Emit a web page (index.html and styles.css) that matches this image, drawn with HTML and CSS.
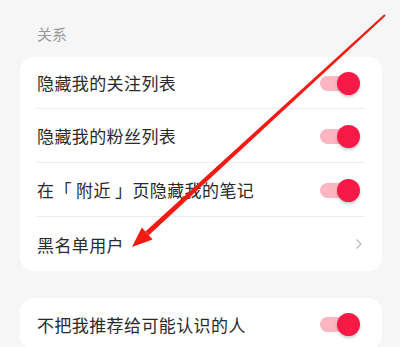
FILE: index.html
```html
<!DOCTYPE html>
<html lang="zh">
<head>
<meta charset="utf-8">
<link rel="stylesheet" href="styles.css">
</head>
<body>
<div class="page">
  <div class="section-title">关系</div>
  <div class="card">
    <div class="row">
      <span class="label">隐藏我的关注列表</span>
      <span class="toggle"><span class="knob"></span></span>
    </div>
    <div class="row">
      <span class="label">隐藏我的粉丝列表</span>
      <span class="toggle"><span class="knob"></span></span>
    </div>
    <div class="row">
      <span class="label">在「 附近 」页隐藏我的笔记</span>
      <span class="toggle"><span class="knob"></span></span>
    </div>
    <div class="row">
      <span class="label">黑名单用户</span>
      <svg class="chevron" width="8" height="12" viewBox="0 0 8 12"><path d="M1.5 1.5 L6 6 L1.5 10.5" fill="none" stroke="#b8b8b8" stroke-width="1.2"/></svg>
    </div>
  </div>
  <div class="card card-second">
    <div class="row">
      <span class="label">不把我推荐给可能认识的人</span>
      <span class="toggle"><span class="knob"></span></span>
    </div>
  </div>
</div>
<svg class="arrow" width="400" height="347" viewBox="0 0 400 347">
  <polygon points="385.7,15.7 384.3,14.3 145.4,231.6 148.8,235.3" fill="#f21a12"/>
  <polygon points="132,247 141.8,227.6 152.6,239.4" fill="#f21a12"/>
</svg>
</body>
</html>
```
FILE: styles.css
```css
* { box-sizing: border-box; }
html, body { margin: 0; padding: 0; }
body {
  width: 400px;
  height: 347px;
  overflow: hidden;
  background: #f6f6f6;
  font-family: "Noto Sans CJK SC", "Noto Sans", sans-serif;
  position: relative;
}
.page {
  padding: 22px 18px 0 20px;
}
.section-title {
  font-size: 15px;
  line-height: 24px;
  color: #9a9a9a;
  padding-left: 17px;
  margin-bottom: 11px;
}
.card {
  background: #fff;
  border-radius: 14px;
  padding: 0 17px;
}
.card-second {
  margin-top: 27px;
}
.row {
  height: 54px;
  display: flex;
  align-items: center;
  justify-content: space-between;
  border-bottom: 1px solid #ececec;
}
.card > .row:first-child { height: 52px; }
.card > .row:last-child { border-bottom: none; }
.label {
  font-size: 17px;
  color: #2a2a2a;
  letter-spacing: 0.4px;
}
.toggle {
  position: relative;
  width: 35px;
  height: 15px;
  border-radius: 8px;
  background: #fbb6c2;
  margin-right: 10px;
  margin-top: 1px;
}
.knob {
  position: absolute;
  right: -5px;
  top: -4px;
  width: 23px;
  height: 23px;
  border-radius: 50%;
  background: #f81946;
  box-shadow: 0 2px 3px rgba(0,0,0,0.2);
}
.chevron {
  margin-right: 2px;
}
.arrow {
  position: absolute;
  left: 0;
  top: 0;
  pointer-events: none;
}
```
